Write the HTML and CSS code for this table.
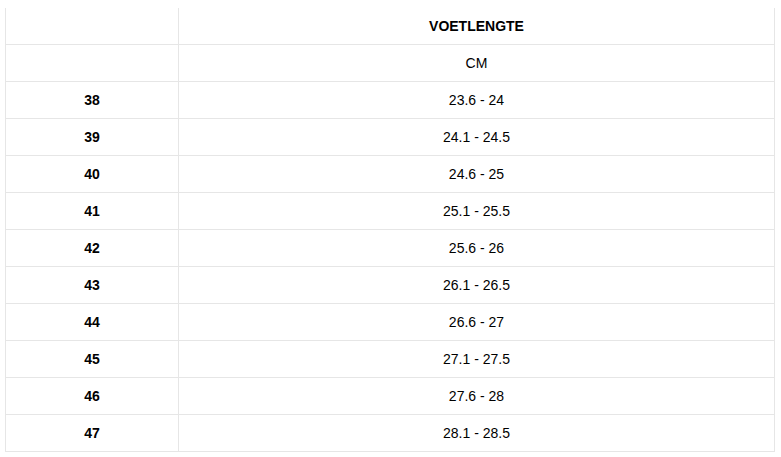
FILE: index.html
```html
<!DOCTYPE html>
<html>
<head>
<meta charset="utf-8">
<link rel="stylesheet" href="styles.css">
</head>
<body>
<table class="size-table">
  <tr><td class="size"></td><td class="head">VOETLENGTE</td></tr>
  <tr><td class="size"></td><td>CM</td></tr>
  <tr><td class="size">38</td><td>23.6 - 24</td></tr>
  <tr><td class="size">39</td><td>24.1 - 24.5</td></tr>
  <tr><td class="size">40</td><td>24.6 - 25</td></tr>
  <tr><td class="size">41</td><td>25.1 - 25.5</td></tr>
  <tr><td class="size">42</td><td>25.6 - 26</td></tr>
  <tr><td class="size">43</td><td>26.1 - 26.5</td></tr>
  <tr><td class="size">44</td><td>26.6 - 27</td></tr>
  <tr><td class="size">45</td><td>27.1 - 27.5</td></tr>
  <tr><td class="size">46</td><td>27.6 - 28</td></tr>
  <tr><td class="size">47</td><td>28.1 - 28.5</td></tr>
</table>
</body>
</html>
```
FILE: styles.css
```css
html, body {
  margin: 0;
  padding: 0;
  background: #ffffff;
}
body {
  padding: 8px 0 0 5px;
  font-family: "Liberation Sans", Arial, sans-serif;
  font-size: 14px;
  color: #000000;
}
.size-table {
  border-collapse: separate;
  border-spacing: 0;
  width: 770px;
  table-layout: fixed;
}
.size-table td {
  height: 36px;
  padding: 0;
  text-align: center;
  vertical-align: middle;
  border-bottom: 1px solid #e6e6e6;
  border-right: 1px solid #e6e6e6;
}
.size-table td.size {
  width: 172px;
  border-left: 1px solid #e6e6e6;
  font-weight: bold;
}
.size-table td.head {
  font-weight: bold;
}
```
